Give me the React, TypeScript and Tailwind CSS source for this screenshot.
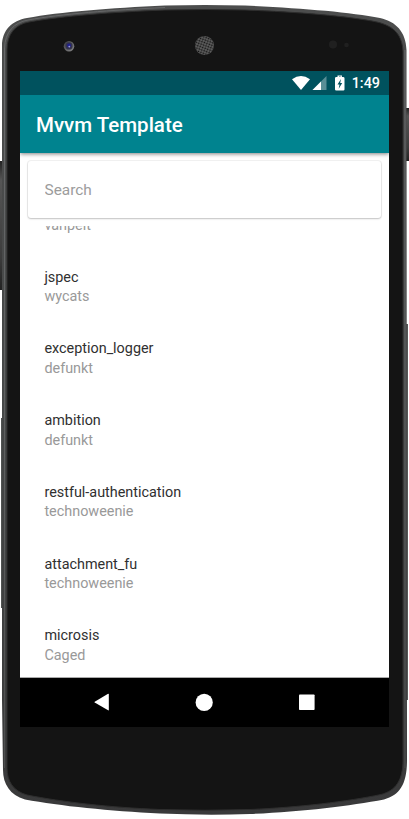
const repositories = [
  { name: "jspec", owner: "wycats" },
  { name: "exception_logger", owner: "defunkt" },
  { name: "ambition", owner: "defunkt" },
  { name: "restful-authentication", owner: "technoweenie" },
  { name: "attachment_fu", owner: "technoweenie" },
  { name: "microsis", owner: "Caged" },
];

const OUTLINE =
  "M2 46C2 30 12 20.5 27 18C60 12 110 8 165 5.5Q205 4.5 245 5.5C300 8 350 12 380 18C396 21.5 406 32 406.5 50L407 760C407 784 400 795 384 799.5C350 806 300 812 250 814Q205 815.5 160 813.5C110 811 60 806 25 799.5C10 795 3 784 3 770L2 700Z";

const FACE =
  "M7 50C7 34 15 24.5 29 22C62 16 112 12 165 10Q205 9 245 10C298 12 348 16 377 22C394 26 402.5 35 403 52L403 760C403 780 396 790.5 381 794.5C348 801.5 298 807.5 250 809.5Q205 811 160 809.5C110 807.5 62 802 27 795C13 791 7 781 7 768Z";

function DeviceBody() {
  return (
    <svg className="absolute inset-0" width="409" height="819" viewBox="0 0 409 819" aria-hidden="true">
      <defs>
        <linearGradient id="rim" x1="0" y1="0" x2="0" y2="1">
          <stop offset="0" stopColor="#4c4d4d" />
          <stop offset="0.5" stopColor="#464848" />
          <stop offset="1" stopColor="#39393a" />
        </linearGradient>
        <linearGradient id="key" x1="0" y1="0" x2="0" y2="1">
          <stop offset="0" stopColor="#222" />
          <stop offset="0.15" stopColor="#555" />
          <stop offset="0.75" stopColor="#3c3c3c" />
          <stop offset="1" stopColor="#222" />
        </linearGradient>
        <linearGradient id="edge" x1="0" y1="0" x2="0" y2="819" gradientUnits="userSpaceOnUse">
          <stop offset="0" stopColor="#6a6b6d" />
          <stop offset="0.6" stopColor="#5c5e5e" />
          <stop offset="1" stopColor="#4a4b4b" />
        </linearGradient>
        <pattern id="mesh" width="2.6" height="2.6" patternUnits="userSpaceOnUse" patternTransform="rotate(20)">
          <circle cx="1.3" cy="1.3" r="0.9" fill="#111" />
        </pattern>
        <linearGradient id="lens" x1="0" y1="0" x2="1" y2="1">
          <stop offset="0" stopColor="#3c3c40" />
          <stop offset="1" stopColor="#8a8a8a" />
        </linearGradient>
      </defs>
      <rect x="0" y="161" width="3" height="129" fill="url(#key)" />
      <rect x="406" y="108" width="3" height="53" fill="url(#key)" />
      <rect x="1" y="418" width="2" height="190" fill="#505352" />
      <rect x="406" y="324" width="2" height="376" fill="#575757" />
      <path d={OUTLINE} fill="url(#rim)" />
      <path d={FACE} fill="#141414" stroke="#2e2e2e" strokeWidth="1" />
      <path d="M4 48H5V768H4ZM404.5 50H405.5V768H404.5Z" fill="url(#edge)" />
      <path d="M4.5 48C5 32 14 22.5 28 20C61 14 111 10 165 7.5" fill="none" stroke="#666768" strokeWidth="1" />
      <circle cx="69" cy="46.3" r="5.3" fill="url(#lens)" />
      <circle cx="69" cy="45.9" r="3.6" fill="#33334c" />
      <circle cx="69" cy="45.4" r="2" fill="#20208a" />
      <circle cx="69.3" cy="46.6" r="0.9" fill="#9a9ad8" />
      <circle cx="204.5" cy="45.5" r="9.5" fill="#606060" />
      <circle cx="204.5" cy="45.5" r="9.5" fill="url(#mesh)" />
      <circle cx="333" cy="44.5" r="4" fill="#202020" />
      <circle cx="346.5" cy="45" r="2.3" fill="#202020" />
    </svg>
  );
}

function StatusBar() {
  return (
    <div className="relative z-10 flex h-6 shrink-0 items-center justify-end bg-[#00525e] pr-[9px] text-white">
      <svg width="54" height="24" viewBox="0 0 54 24" aria-hidden="true">
        <path d="M0 8.2Q9 1.8 18 8.2L9 19Z" fill="#fff" />
        <path d="M34.5 5V19H20.5Z" fill="#fff" fillOpacity="0.35" />
        <path d="M29 10.5V19H20.5Z" fill="#fff" />
        <path d="M45.5 5H47V6H51Q52.5 6 52.5 7.3V18.4Q52.5 19.5 51.3 19.5H44.3Q43 19.5 43 18.4V7.3Q43 6 44.3 6H45.5V4.5H50V6" fill="#fff" />
        <path d="M49 8L45.5 13.4H47.5L46.7 17.7L50.2 12.1H48.2Z" fill="#00525e" />
      </svg>
      <span className="ml-[6px] mt-[2px] text-[14.4px] font-medium leading-6">1:49</span>
    </div>
  );
}

function NavigationBar() {
  return (
    <div className="flex h-[49px] shrink-0 items-center justify-center gap-[83px] bg-black">
      <svg width="20" height="20" viewBox="0 0 20 20" aria-hidden="true">
        <path d="M16.8 1.2V17Q16.8 17.7 16.1 17.3L2.7 9.6Q2.1 9.2 2.7 8.8L16.1 0.8Q16.8 0.5 16.8 1.2Z" fill="#fff" />
      </svg>
      <svg width="20" height="20" viewBox="0 0 20 20" aria-hidden="true">
        <circle cx="9.2" cy="9.4" r="8.6" fill="#fff" />
      </svg>
      <svg width="20" height="20" viewBox="0 0 20 20" aria-hidden="true">
        <rect x="1" y="1.4" width="15.6" height="15.6" rx="0.8" fill="#fff" />
      </svg>
    </div>
  );
}

export default function App() {
  return (
    <div className="relative h-[819px] w-[409px] overflow-hidden bg-white pl-5 pt-[71px] font-['Roboto',sans-serif]">
      <DeviceBody />
      <main className="relative flex h-[656px] w-[369px] flex-col overflow-hidden bg-white">
        <StatusBar />
        <header className="relative flex h-[57.5px] shrink-0 items-center bg-[#00838f] pl-4 pt-[2px] shadow-[0_1px_4px_rgba(0,0,0,0.5)]">
          <h1 className="text-[20.5px] font-medium leading-7 text-white">Mvvm Template</h1>
        </header>
        <div className="mx-2 mt-[8.5px] flex h-[57px] shrink-0 items-center rounded-[3px] bg-white pl-[16.5px] pt-[2px] shadow-[0_1px_2px_rgba(0,0,0,0.2)] ring-1 ring-black/5">
          <input
            aria-label="Search"
            placeholder="Search"
            className="w-full bg-transparent text-[15.4px] outline-none placeholder:text-[#9c9c9c]"
          />
        </div>
        <section className="mt-2 flex min-h-0 flex-1 flex-col overflow-hidden border-b border-[#aaa] pl-[24.4px] pr-6">
          <div className="h-[27.6px] shrink-0">
            <p className="-mt-[10px] text-[14.4px] leading-[19px] text-[#999]">vanpelt</p>
          </div>
          <ul>
            {repositories.map((repo) => (
              <li key={repo.name} className="h-[71.75px] pt-[14px] text-[14.4px] leading-[19.5px]">
                <p className="text-[#303030]">{repo.name}</p>
                <p className="text-[#999]">{repo.owner}</p>
              </li>
            ))}
          </ul>
        </section>
        <NavigationBar />
      </main>
    </div>
  );
}
